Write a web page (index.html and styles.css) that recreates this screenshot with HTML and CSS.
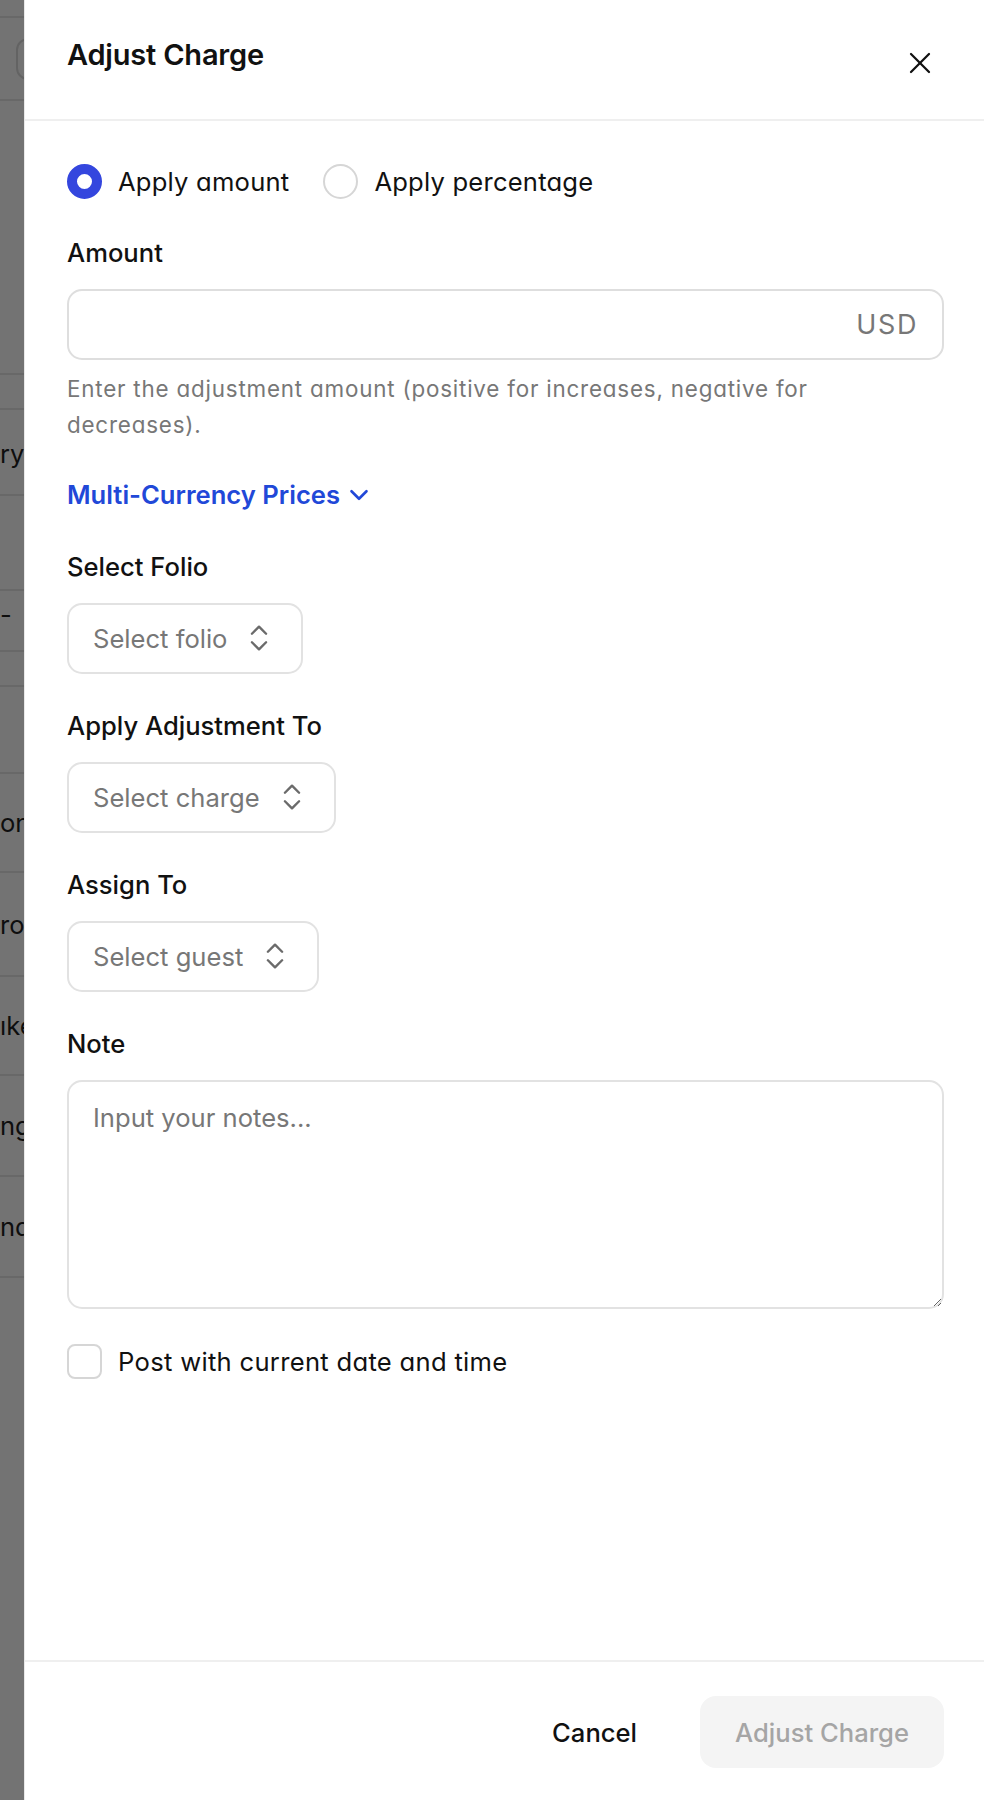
FILE: index.html
```html
<!DOCTYPE html>
<html lang="en">
<head>
  <meta charset="UTF-8" />
  <meta name="viewport" content="width=device-width, initial-scale=1.0"/>
  <title>Adjust Charge</title>
  <link rel="stylesheet" href="styles.css">
</head>
<body>
  <!-- folio page behind the drawer -->
  <div class="page">
    <div class="page-top"></div>
    <div class="page-toolbar"><span class="page-search"></span></div>
    <div class="page-summary"></div>
    <div class="page-row thin"></div>
    <div class="page-row head"><span class="cell">ry</span></div>
    <div class="page-row r95"></div>
    <div class="page-row r61"><span class="cell">-</span></div>
    <div class="page-row thin"></div>
    <div class="page-row r87"></div>
    <div class="page-row r99"><span class="cell">on</span></div>
    <div class="page-row r104"><span class="cell">ro</span></div>
    <div class="page-row r99"><span class="cell">ıke</span></div>
    <div class="page-row r101"><span class="cell">ng</span></div>
    <div class="page-row r101"><span class="cell">nd</span></div>
  </div>

  <div class="overlay"></div>

  <aside class="drawer">
    <header class="drawer-head">
      <h2>Adjust Charge</h2>
      <button class="close-btn" type="button">
        <svg width="36" height="36" viewBox="0 0 24 24" fill="none" stroke="#111" stroke-width="1.5" stroke-linecap="round"><path d="M18 6 6 18"/><path d="m6 6 12 12"/></svg>
      </button>
    </header>

    <div class="drawer-body">
      <div class="radio-row">
        <label class="radio-opt"><span class="radio checked"></span>Apply amount</label>
        <label class="radio-opt"><span class="radio"></span>Apply percentage</label>
      </div>

      <div class="field amount-field">
        <div class="field-label">Amount</div>
        <div class="amount-input"><span class="suffix">USD</span></div>
        <p class="hint">Enter the adjustment amount (positive for increases, negative for decreases).</p>
      </div>

      <button class="link-btn" type="button">Multi-Currency Prices
        <svg width="30" height="30" viewBox="0 0 24 24" fill="none" stroke="currentColor" stroke-width="2.1" stroke-linecap="round" stroke-linejoin="round"><path d="m6 9 6 6 6-6"/></svg>
      </button>

      <div class="field first-select">
        <div class="field-label">Select Folio</div>
        <div class="select">Select folio
          <svg width="34" height="34" viewBox="0 0 24 24" fill="none" stroke="#6b6b6b" stroke-width="1.7" stroke-linecap="round" stroke-linejoin="round"><path d="m7 15 5 5 5-5"/><path d="m7 9 5-5 5 5"/></svg>
        </div>
      </div>

      <div class="field">
        <div class="field-label">Apply Adjustment To</div>
        <div class="select">Select charge
          <svg width="34" height="34" viewBox="0 0 24 24" fill="none" stroke="#6b6b6b" stroke-width="1.7" stroke-linecap="round" stroke-linejoin="round"><path d="m7 15 5 5 5-5"/><path d="m7 9 5-5 5 5"/></svg>
        </div>
      </div>

      <div class="field">
        <div class="field-label">Assign To</div>
        <div class="select">Select guest
          <svg width="34" height="34" viewBox="0 0 24 24" fill="none" stroke="#6b6b6b" stroke-width="1.7" stroke-linecap="round" stroke-linejoin="round"><path d="m7 15 5 5 5-5"/><path d="m7 9 5-5 5 5"/></svg>
        </div>
      </div>

      <div class="field">
        <div class="field-label">Note</div>
        <textarea class="note" placeholder="Input your notes..."></textarea>
      </div>

      <label class="check-row"><span class="checkbox"></span>Post with current date and time</label>
    </div>

    <footer class="drawer-foot">
      <button class="btn-ghost" type="button">Cancel</button>
      <button class="btn-primary" type="button" disabled>Adjust Charge</button>
    </footer>
  </aside>
</body>
</html>
```

FILE: styles.css
```css
* {
  box-sizing: border-box;
}

body {
  margin: 0;
  font-family: Inter, "Noto Sans", sans-serif;
  color: #111;
  background: #fff;
  height: 1800px;
  overflow: hidden;
}

/* page behind the overlay */
.page {
  width: 984px;
  font-size: 25.6px;
  color: #1f1f1f;
}

.page-top {
  height: 18px;
  border-bottom: 2px solid #e6e6e6;
}

.page-toolbar {
  height: 83px;
  border-bottom: 2px solid #e6e6e6;
  padding: 20px 0 0 16px;
}

.page-search {
  display: block;
  width: 200px;
  height: 42px;
  border: 2px solid #dcdcdc;
  border-radius: 12px;
}

.page-summary {
  height: 274px;
  border-bottom: 2px solid #e6e6e6;
}

.page-row {
  display: flex;
  align-items: center;
  border-bottom: 2px solid #e6e6e6;
}

.page-row.thin { height: 35px; }
.page-row.head { height: 86px; padding-top: 2px; }
.page-row.r95 { height: 95px; }
.page-row.r61 { height: 61px; padding-bottom: 12px; }
.page-row.r87 { height: 87px; }
.page-row.r99 { height: 99px; }
.page-row.r101 { height: 101px; }
.page-row.r104 { height: 104px; }

.cell {
  white-space: nowrap;
}

.overlay {
  position: fixed;
  inset: 0;
  background: rgba(0, 0, 0, 0.55);
}

/* drawer */
.drawer {
  position: absolute;
  top: 0;
  right: 0;
  width: 960px;
  height: 1800px;
  background: #fff;
  border-left: 1px solid #e9e9e9;
  display: flex;
  flex-direction: column;
}

.drawer-head {
  height: 121px;
  flex-shrink: 0;
  display: flex;
  justify-content: space-between;
  align-items: flex-start;
  padding: 37px 46px 0 42px;
  border-bottom: 2px solid #efefef;
}

.drawer-head h2 {
  margin: 0;
  font-size: 29px;
  line-height: 36px;
  font-weight: 600;
  letter-spacing: -0.2px;
}

.close-btn {
  margin-top: 8px;
  padding: 0;
  border: none;
  background: none;
  display: flex;
  cursor: pointer;
}

.drawer-body {
  flex: 1;
  padding: 43px 40px 0 42px;
}

.radio-row {
  display: flex;
  align-items: center;
  gap: 34px;
  height: 35px;
}

.radio-opt {
  display: flex;
  align-items: center;
  gap: 16px;
  font-size: 25.6px;
  letter-spacing: 0.2px;
  font-feature-settings: "cv11";
  color: #111;
}

.radio {
  width: 35px;
  height: 35px;
  border-radius: 50%;
  border: 2px solid #d6d6d6;
  background: #fff;
}

.radio.checked {
  border: 10px solid #3446de;
}

.field {
  margin-top: 33px;
}

.field.amount-field {
  margin-top: 35px;
}

.field.first-select {
  margin-top: 34px;
}

.field-label {
  font-size: 25.6px;
  line-height: 38px;
  font-weight: 500;
  margin-bottom: 17px;
}

.amount-input {
  height: 71px;
  border: 2px solid #dedede;
  border-radius: 15px;
  display: flex;
  align-items: center;
  justify-content: flex-end;
  padding-right: 24px;
}

.suffix {
  font-size: 27px;
  letter-spacing: 1.6px;
  color: #777;
}

.hint {
  margin: 11px 0 0;
  font-size: 22.4px;
  line-height: 35.8px;
  letter-spacing: 0.8px;
  color: #777;
  font-feature-settings: "cv11";
  max-width: 780px;
}

.link-btn {
  margin-top: 33px;
  padding: 0;
  border: none;
  background: none;
  display: flex;
  align-items: center;
  gap: 4px;
  font-family: inherit;
  font-size: 25.6px;
  line-height: 38px;
  font-weight: 600;
  color: #2148d8;
  cursor: pointer;
}

.select {
  display: inline-flex;
  align-items: center;
  gap: 15px;
  height: 71px;
  padding: 0 25px 0 24px;
  border: 2px solid #e2e2e2;
  border-radius: 15px;
  font-size: 25.6px;
  color: #777;
}

.note {
  display: block;
  width: 100%;
  height: 229px;
  padding: 17px 24px;
  border: 2px solid #e2e2e2;
  border-radius: 15px;
  font-family: inherit;
  font-size: 25.6px;
  line-height: 38px;
  color: #111;
  outline: none;
}

.note::placeholder {
  color: #777;
}

.check-row {
  margin-top: 35px;
  display: flex;
  align-items: center;
  gap: 16px;
  font-size: 25.6px;
  letter-spacing: 0.3px;
  font-feature-settings: "cv11";
}

.checkbox {
  width: 35px;
  height: 35px;
  border: 2px solid #d6d6d6;
  border-radius: 8px;
}

.drawer-foot {
  flex-shrink: 0;
  display: flex;
  justify-content: flex-end;
  gap: 28px;
  padding: 34px 40px 32px;
  border-top: 2px solid #efefef;
}

.btn-ghost,
.btn-primary {
  height: 72px;
  padding: 0 35px;
  border: none;
  border-radius: 16px;
  font-family: inherit;
  font-size: 25.6px;
  font-weight: 500;
  cursor: pointer;
}

.btn-ghost {
  background: none;
  color: #111;
}

.btn-primary {
  background: #f4f4f4;
  color: #a5a5a5;
}
```
